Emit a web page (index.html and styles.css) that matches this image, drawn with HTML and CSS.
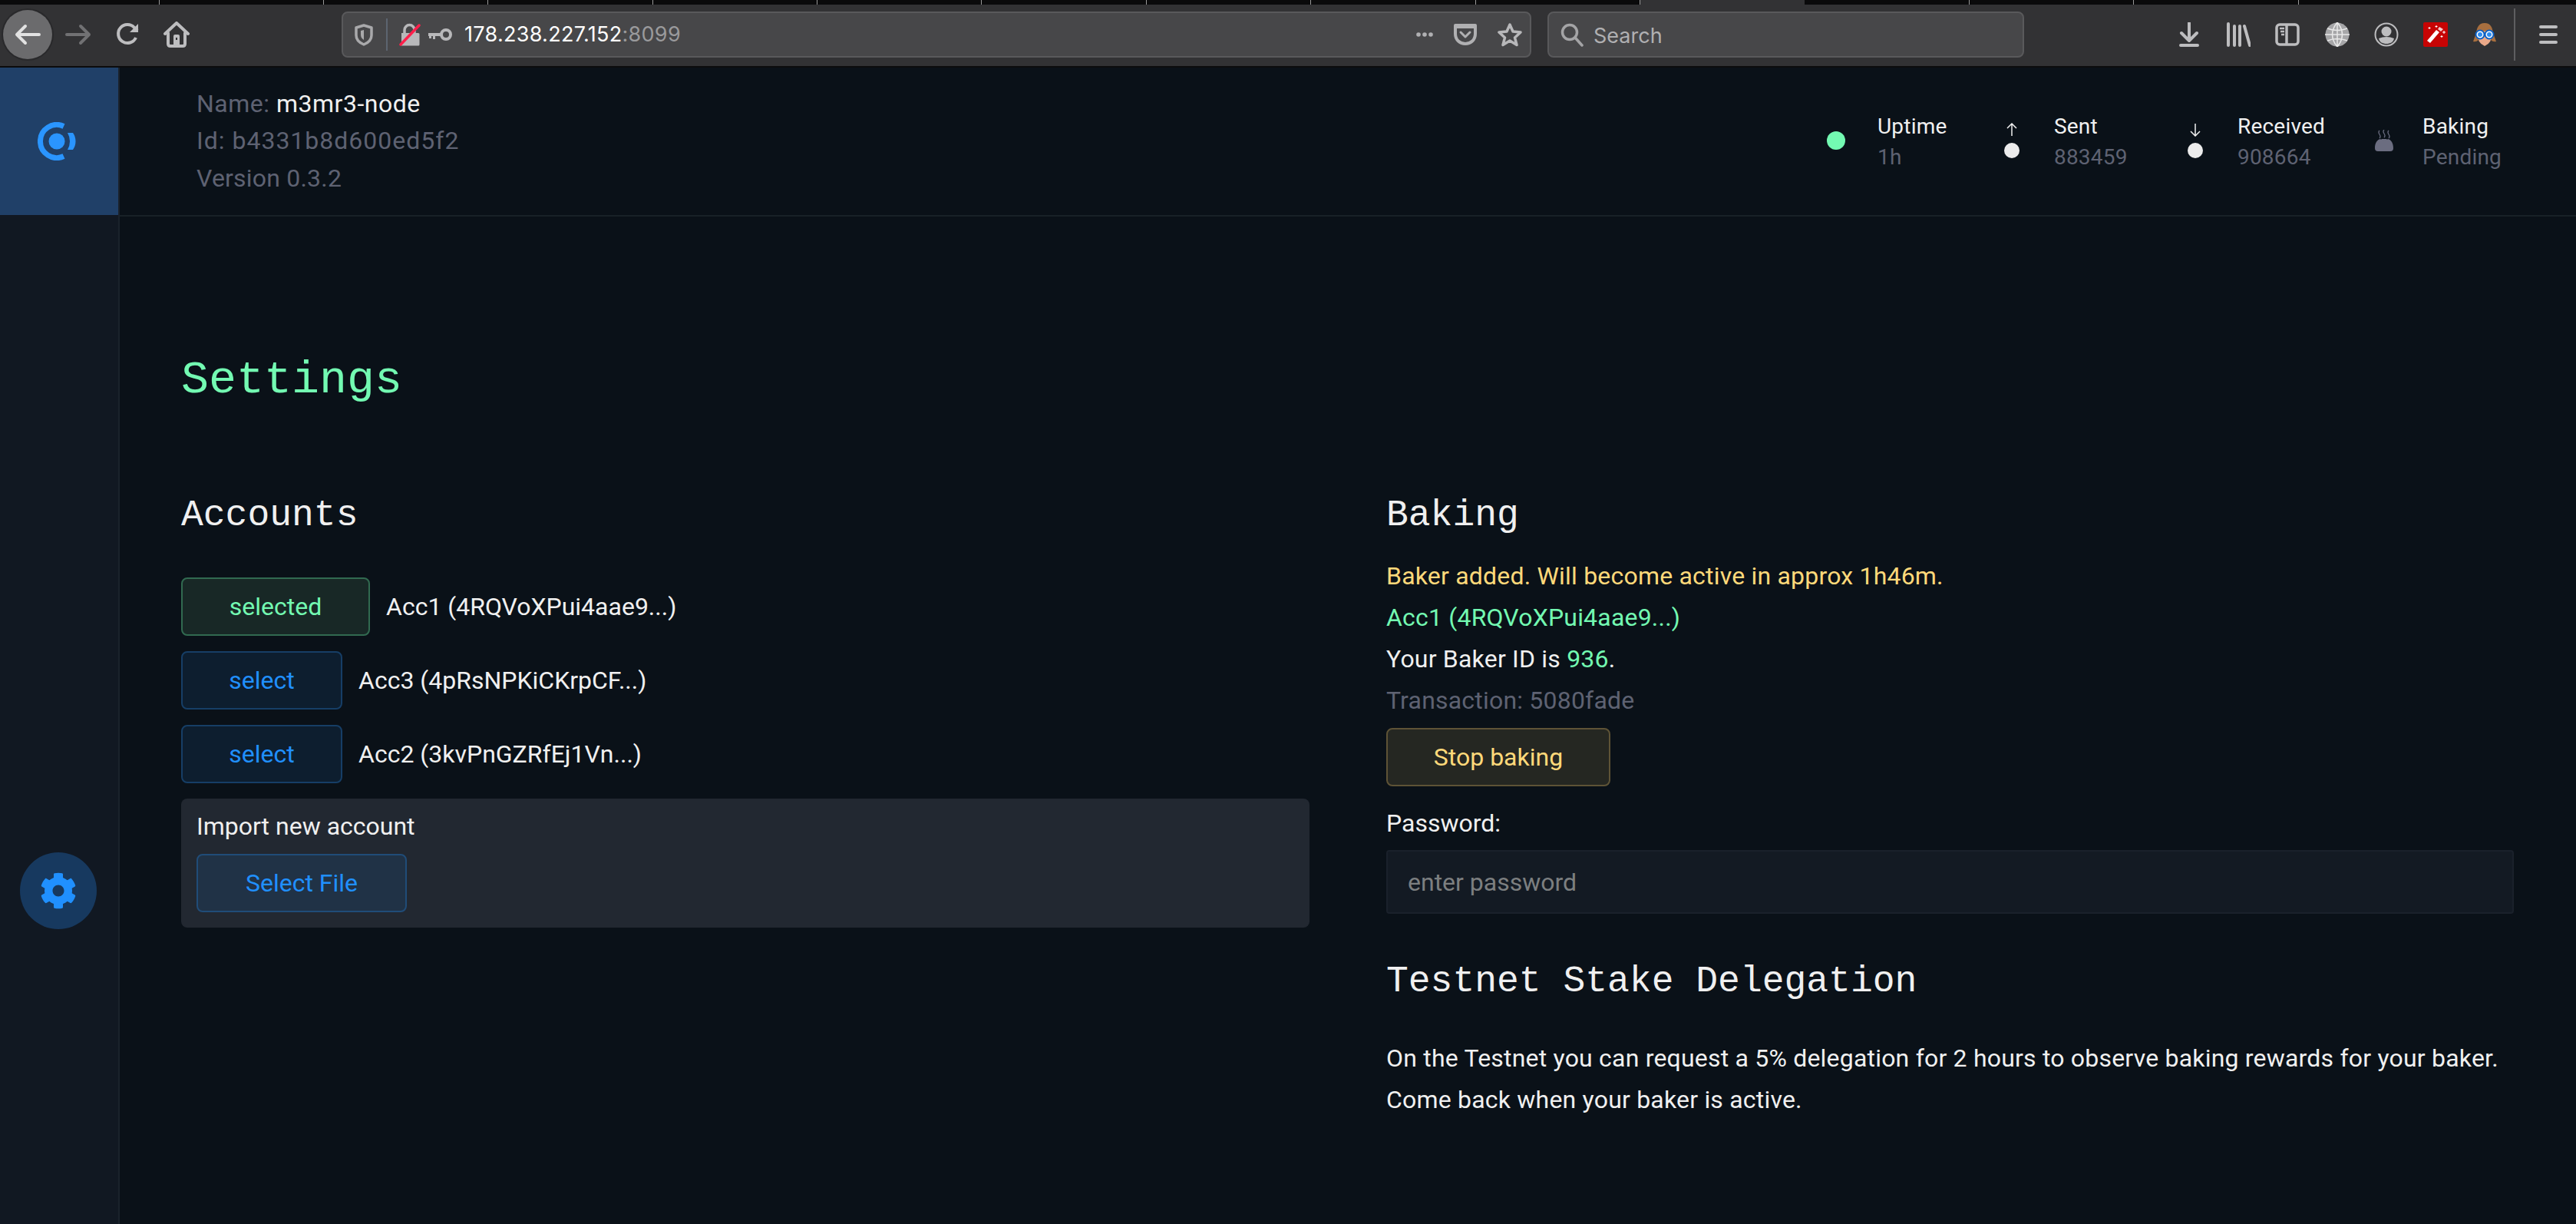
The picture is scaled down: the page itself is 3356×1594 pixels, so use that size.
FILE: index.html
```html
<!DOCTYPE html>
<html lang="en">
<head>
    <meta charset="UTF-8">
    <title>Settings</title>
    <link rel="stylesheet" href="styles.css">
</head>

<body>
    <!-- browser chrome -->
    <div class="tabstrip">
        <div class="tab first"></div>
        <div class="tab"></div>
        <div class="tab"></div>
        <div class="tab"></div>
        <div class="tab"></div>
        <div class="tab"></div>
        <div class="tab"></div>
        <div class="tab"></div>
        <div class="tab"></div>
        <div class="tab"></div>
        <div class="tab active"></div>
        <div class="tab"></div>
        <div class="tab"></div>
        <div class="tab"></div>
        <div class="tab last"></div>
    </div>
    <div class="toolbar">
        <div class="nav-btn back">
            <svg width="36" height="32" viewBox="0 0 36 32"><path d="M33 16H5M15 5 4 16l11 11" fill="none" stroke="#e2e2e2" stroke-width="4" stroke-linecap="round" stroke-linejoin="round"/></svg>
        </div>
        <div class="nav-btn fwd">
            <svg width="36" height="32" viewBox="0 0 36 32"><path d="M3 16h28M21 5l11 11-11 11" fill="none" stroke="#717173" stroke-width="4" stroke-linecap="round" stroke-linejoin="round"/></svg>
        </div>
        <div class="nav-btn">
            <svg width="32" height="32" viewBox="0 0 32 32"><path d="M27 20a12 12 0 1 1-2-13l4 4" fill="none" stroke="#bdbdbf" stroke-width="4"/><path d="M30 2v11H19z" fill="#bdbdbf"/></svg>
        </div>
        <div class="nav-btn">
            <svg width="34" height="34" viewBox="0 0 34 34"><path d="M2 16 17 2l15 14M6 15v14q0 3 3 3h16q3 0 3-3V15" fill="none" stroke="#bdbdbf" stroke-width="4" stroke-linecap="round" stroke-linejoin="round"/><path d="M13 31V19q0-2 2-2h4q2 0 2 2v12z" fill="#bdbdbf"/><rect x="16" y="21" width="2" height="3" fill="#323234"/></svg>
        </div>

        <div class="urlbar">
            <svg class="shield" width="24" height="29" viewBox="0 0 24 29"><path d="M12 2 22 5v10c0 6-5 10-10 12C7 25 2 21 2 15V5z" fill="none" stroke="#a9a9ab" stroke-width="3.5" stroke-linejoin="round"/><path d="M12 8v13c-3-2-4-4-4-7V9z" fill="#a9a9ab"/></svg>
            <span class="url-sep"></span>
            <svg class="lock" width="28" height="30" viewBox="0 0 28 30"><path d="M7 13V9a6.5 6.5 0 0 1 13 0v4" fill="none" stroke="#b8b8ba" stroke-width="3.5"/><path d="M3 13h22q1.5 0 1.5 1.5V28q0 1.5-1.5 1.5H3z" fill="#b8b8ba"/><path d="M2 28 26 3" stroke="#ff1f4b" stroke-width="3.5" stroke-linecap="round"/></svg>
            <svg class="key" width="32" height="18" viewBox="0 0 32 18"><circle cx="23" cy="9" r="6" fill="none" stroke="#b8b8ba" stroke-width="4"/><path d="M0 7h17v4H9v4H6v-4H4v3H1v-3H0z" fill="#b8b8ba"/></svg>
            <span class="url-text">178.238.227.152<span class="url-port">:8099</span></span>
            <span class="url-actions">
                <svg width="22" height="8" viewBox="0 0 22 8"><circle cx="3" cy="4" r="2.8" fill="#b0b0b2"/><circle cx="11" cy="4" r="2.8" fill="#b0b0b2"/><circle cx="19" cy="4" r="2.8" fill="#b0b0b2"/></svg>
                <svg class="pocket" width="32" height="30" viewBox="0 0 32 30"><path d="M3 3h26v11c0 8-6 13-13 13S3 22 3 14z" fill="none" stroke="#b0b0b2" stroke-width="4" stroke-linejoin="round"/><path d="M3 3h26v4H3z" fill="#b0b0b2"/><path d="M10 12l6 6 6-6" fill="none" stroke="#b0b0b2" stroke-width="3" stroke-linecap="round" stroke-linejoin="round"/></svg>
                <svg class="star" width="32" height="32" viewBox="0 0 32 32"><path d="M16 3l4 9 10 1-7.5 7 2.5 9.5-9-5.5-9 5.5L9.5 20 2 13l10-1z" fill="none" stroke="#b8b8ba" stroke-width="3.5" stroke-linejoin="round"/></svg>
            </span>
        </div>

        <div class="searchbar">
            <svg width="32" height="32" viewBox="0 0 32 32"><circle cx="13" cy="13" r="9.5" fill="none" stroke="#a4a4a6" stroke-width="3.5"/><path d="M20 20l9 10" stroke="#a4a4a6" stroke-width="3.5" stroke-linecap="round"/></svg>
            <span class="search-text">Search</span>
        </div>

        <div class="tools">
            <div class="tool">
                <svg width="26" height="32" viewBox="0 0 26 32"><path d="M13 1v22M3 14l10 10 10-10M2 30h22" fill="none" stroke="#bdbdbf" stroke-width="4" stroke-linecap="round" stroke-linejoin="round"/></svg>
            </div>
            <div class="tool">
                <svg width="32" height="32" viewBox="0 0 32 32"><path d="M3 2v28M11 5v25M18 5v25M24 5l7 25" fill="none" stroke="#bdbdbf" stroke-width="4" stroke-linecap="round"/></svg>
            </div>
            <div class="tool">
                <svg width="32" height="30" viewBox="0 0 32 30"><rect x="2" y="2" width="28" height="26" rx="4" fill="none" stroke="#bdbdbf" stroke-width="3.5"/><path d="M15 2v26" stroke="#bdbdbf" stroke-width="3.5"/><path d="M6 7h6M7 11h5M8 15h4" stroke="#bdbdbf" stroke-width="2.5"/></svg>
            </div>
            <div class="tool">
                <svg width="32" height="32" viewBox="0 0 32 32"><circle cx="16" cy="16" r="15.5" fill="#a6a6a8"/><path d="M16 0v32M0 16h32M3 8q13 5 26 0M3 24q13-5 26 0M16 0Q3 16 16 32M16 0q13 16 0 32" fill="none" stroke="#e8e8e8" stroke-width="1.5"/></svg>
            </div>
            <div class="tool">
                <svg width="32" height="32" viewBox="0 0 32 32"><circle cx="16" cy="16" r="14.5" fill="none" stroke="#bdbdbf" stroke-width="2"/><circle cx="16" cy="12" r="6.5" fill="#bdbdbf"/><path d="M6 21q10-4 20 0c-1 5-5 7-10 7s-9-2-10-7z" fill="#bdbdbf"/></svg>
            </div>
            <div class="tool">
                <svg width="32" height="32" viewBox="0 0 32 32"><rect width="32" height="32" rx="2" fill="#c70404"/><path d="M5 24 17 10l4 3L9 27z" fill="#fff"/><path d="M21 6l5 3-3 3-4-3z" fill="#fff" opacity=".8"/><path d="M8 6v3M6.5 7.5h3M17 4v3M15.5 5.5h3M27 11v4M25 13h4M24 17v3M22.5 18.5h3" stroke="#fff" stroke-width="1"/></svg>
            </div>
            <div class="tool">
                <svg width="30" height="30" viewBox="0 0 30 30"><path d="M15 0C7 0 5 6 4 13L0 24q4 1 7-2h16q3 3 7 2l-4-11C25 6 23 0 15 0z" fill="#a86f3f"/><path d="M6 13q9-5 18 0 1 13-9 17Q5 26 6 13z" fill="#eaa989"/><path d="M13 15h4" stroke="#fff" stroke-width="1.5"/><circle cx="9" cy="15" r="5.5" fill="#fff" stroke="#0a5fc4" stroke-width="2"/><circle cx="21" cy="15" r="5.5" fill="#fff" stroke="#0a5fc4" stroke-width="2"/><circle cx="9" cy="15" r="3" fill="#2d8cf0"/><circle cx="21" cy="15" r="3" fill="#2d8cf0"/></svg>
            </div>
        </div>
        <span class="tool-sep"></span>
        <div class="hamburger"><span></span><span></span><span></span></div>
    </div>

    <div class="app">
        <div class="sidebar">
            <div class="logo">
                <svg width="50" height="50" viewBox="0 0 50 50"><path d="M34 5.5A21.5 21.5 0 1 0 34 44.5" fill="none" stroke="#2a95ff" stroke-width="7"/><circle cx="25" cy="25" r="10.5" fill="#2a95ff"/><path d="M39 14h7q3.5 5 3.5 11T46 36h-7q3-5 3-11t-3-11z" fill="#2a95ff"/></svg>
            </div>
            <div class="gear">
                <svg width="48" height="48" viewBox="0 0 512 512"><path fill="#2090ff" d="M487.4 315.7l-42.6-24.6c4.3-23.2 4.3-47 0-70.2l42.6-24.6c4.9-2.8 7.1-8.6 5.5-14-11.1-35.6-30-67.8-54.7-94.6-3.8-4.1-10-5.1-14.8-2.3L380.8 110c-17.9-15.4-38.5-27.3-60.8-35.1V25.8c0-5.6-3.9-10.5-9.4-11.7-36.7-8.2-74.3-7.8-109.2 0-5.5 1.2-9.4 6.1-9.4 11.7V75c-22.2 7.9-42.8 19.8-60.8 35.1L88.7 85.5c-4.9-2.8-11-1.9-14.8 2.3-24.7 26.7-43.6 58.9-54.7 94.6-1.7 5.4.6 11.2 5.5 14L67.3 221c-4.3 23.2-4.3 47 0 70.2l-42.6 24.6c-4.9 2.8-7.1 8.6-5.5 14 11.1 35.6 30 67.8 54.7 94.6 3.8 4.1 10 5.1 14.8 2.3l42.6-24.6c17.9 15.4 38.5 27.3 60.8 35.1v49.2c0 5.6 3.9 10.5 9.4 11.7 36.7 8.2 74.3 7.8 109.2 0 5.5-1.2 9.4-6.1 9.4-11.7v-49.2c22.2-7.9 42.8-19.8 60.8-35.1l42.6 24.6c4.9 2.8 11 1.9 14.8-2.3 24.7-26.7 43.6-58.9 54.7-94.6 1.5-5.5-.7-11.3-5.6-14.1zM256 336c-44.1 0-80-35.9-80-80s35.9-80 80-80 80 35.9 80 80-35.9 80-80 80z"/></svg>
            </div>
        </div>

        <div class="page">
            <div class="header">
                <div class="node-info">
                    <div class="node-name">Name: <span class="white">m3mr3-node</span></div>
                    <div class="node-id">Id: b4331b8d600ed5f2</div>
                    <div class="node-version">Version 0.3.2</div>
                </div>
                <div class="stats">
                    <div class="stat-ico"><span class="dot green"></span></div>
                    <div class="stat-text"><div class="white">Uptime</div><div>1h</div></div>
                    <div class="stat-ico arrow-col">
                        <svg width="20" height="18" viewBox="0 0 20 18"><path d="M10 17V2M4 7l6-6 6 6" fill="none" stroke="#f0f0f0" stroke-width="1.5"/></svg>
                        <span class="dot small"></span>
                    </div>
                    <div class="stat-text"><div class="white">Sent</div><div>883459</div></div>
                    <div class="stat-ico arrow-col">
                        <svg width="20" height="18" viewBox="0 0 20 18"><path d="M10 1v15M4 11l6 6 6-6" fill="none" stroke="#f0f0f0" stroke-width="1.5"/></svg>
                        <span class="dot small"></span>
                    </div>
                    <div class="stat-text"><div class="white">Received</div><div>908664</div></div>
                    <div class="stat-ico">
                        <svg width="26" height="28" viewBox="0 0 26 28"><path d="M7 1q-2 2 0 5t0 5M13 0q-2 2 0 5t0 5M19 1q-2 2 0 5t0 5" fill="none" stroke="#6b6d80" stroke-width="1.3"/><path d="M1 24c0-7 3-11 7-12 1 1 1 1 2 0h6c1 1 1 1 2 0 4 1 7 5 7 12q0 4-4 4H5q-4 0-4-4z" fill="#6b6d80"/></svg>
                    </div>
                    <div class="stat-text"><div class="white">Baking</div><div>Pending</div></div>
                </div>
            </div>

            <div class="content">
                <h1 class="page-title">Settings</h1>
                <div class="columns">
                    <div class="col">
                        <h2 class="section-title">Accounts</h2>
                        <div class="account-list">
                            <div class="account">
                                <button class="btn btn-green btn-selected">selected</button>
                                <span>Acc1 (4RQVoXPui4aae9...)</span>
                            </div>
                            <div class="account">
                                <button class="btn btn-blue btn-select">select</button>
                                <span>Acc3 (4pRsNPKiCKrpCF...)</span>
                            </div>
                            <div class="account">
                                <button class="btn btn-blue btn-select">select</button>
                                <span>Acc2 (3kvPnGZRfEj1Vn...)</span>
                            </div>
                        </div>
                        <div class="import-box">
                            <div class="import-label">Import new account</div>
                            <button class="btn btn-file">Select File</button>
                        </div>
                    </div>
                    <div class="col col-right">
                        <h2 class="section-title">Baking</h2>
                        <div class="baking-lines">
                            <div class="yellow">Baker added. Will become active in approx 1h46m.</div>
                            <div class="green-text">Acc1 (4RQVoXPui4aae9...)</div>
                            <div>Your Baker ID is <span class="green-text">936</span>.</div>
                            <div class="muted">Transaction: 5080fade</div>
                        </div>
                        <button class="btn btn-yellow">Stop baking</button>
                        <label class="pw-label" for="pw">Password:</label>
                        <input class="pw-input" id="pw" type="password" placeholder="enter password">
                        <h2 class="section-title delegation">Testnet Stake Delegation</h2>
                        <p class="delegation-text">On the Testnet you can request a 5% delegation for 2 hours to observe baking rewards for your baker.<br>Come back when your baker is active.</p>
                    </div>
                </div>
            </div>
        </div>
    </div>
</body>

</html>
```

FILE: styles.css
```css
* {
    box-sizing: border-box;
}

html,
body {
    margin: 0;
    height: 1594px;
    overflow: hidden;
}

body {
    display: flex;
    flex-direction: column;
    background: #0a1118;
    color: #f0f0f0;
    font-family: "Roboto", "Liberation Sans", sans-serif;
    font-size: 32px;
    line-height: 54px;
}

/* browser chrome */
.tabstrip {
    display: flex;
    height: 6px;
    background: #0a0a0b;
}

.tab {
    width: 214.4px;
    flex: none;
    border-right: 1px solid #9a9a9a;
}

.tab.first {
    width: 207.5px;
}

.tab.active {
    background: #323234;
    border-right: 0;
}

.tab.last {
    border-right: 0;
}

.toolbar {
    display: flex;
    align-items: center;
    height: 82px;
    padding-left: 4px;
    padding-bottom: 2px;
    background: #323234;
    border-bottom: 2px solid #0c0c0d;
}

.nav-btn {
    display: flex;
    align-items: center;
    justify-content: center;
    width: 64px;
    height: 64px;
    flex: none;
}

.nav-btn.back {
    margin-right: 2px;
    border-radius: 50%;
    background: #6b6b6d;
    box-shadow: 0 0 0 2px #29292b;
}

.urlbar,
.searchbar {
    display: flex;
    align-items: center;
    height: 60px;
    flex: none;
    border: 2px solid #59595b;
    border-radius: 8px;
    background: #474749;
}

.urlbar {
    width: 1550px;
    margin-left: 183px;
    padding: 0 10px 0 15px;
    font-family: "Inter", "Roboto", sans-serif;
    font-size: 27px;
    color: #fff;
}

.url-sep {
    width: 2px;
    height: 42px;
    margin-left: 17px;
    background: #5c6470;
}

.lock {
    margin-left: 15px;
}

.key {
    margin-left: 10px;
}

.url-text {
    margin-left: 15px;
    letter-spacing: .3px;
}

.url-port {
    color: #9a9a9c;
}

.url-actions {
    display: flex;
    align-items: center;
    gap: 26px;
    margin-left: auto;
}

.searchbar {
    width: 621px;
    margin-left: 21px;
    padding-left: 14px;
    color: #b0b0b2;
    font-family: "Inter", "Roboto", sans-serif;
    font-size: 27px;
}

.search-text {
    margin-left: 12px;
    padding-top: 3px;
}

.tools {
    display: flex;
    margin-left: 183px;
}

.tool {
    display: flex;
    align-items: center;
    justify-content: center;
    width: 64.2px;
    height: 64px;
}

.tool-sep {
    width: 2px;
    height: 68px;
    margin-left: 6px;
    background: #5e5e60;
}

.hamburger {
    display: flex;
    flex-direction: column;
    gap: 6px;
    margin-left: 31px;
}

.hamburger span {
    display: block;
    width: 24px;
    height: 4px;
    border-radius: 2px;
    background: #bdbdbf;
}

/* app */
.app {
    display: flex;
    flex: 1;
    min-height: 0;
}

.sidebar {
    width: 156px;
    flex: none;
    background: #111822;
    border-right: 2px solid #1a222b;
}

.logo {
    display: flex;
    align-items: center;
    justify-content: center;
    height: 192px;
    padding-right: 7px;
    background: #204068;
}

.gear {
    display: flex;
    align-items: center;
    justify-content: center;
    width: 100px;
    height: 100px;
    margin: 830px 0 0 26px;
    border-radius: 50%;
    background: #17395f;
}

.page {
    flex: 1;
    min-width: 0;
}

.header {
    display: flex;
    align-items: center;
    justify-content: space-between;
    height: 194px;
    padding: 0 100px 2px 100px;
    border-bottom: 2px solid #182127;
}

.node-info {
    color: #5e6272;
    line-height: 48px;
}

.node-name {
    letter-spacing: .5px;
}

.node-id {
    letter-spacing: 1px;
}

.node-version {
    letter-spacing: .2px;
    padding-top: 1px;
}

.white {
    color: #f0f0f0;
}

.stats {
    display: grid;
    grid-template-columns: 66px 165px 65px 174px 65px 178px 63px 100px;
    align-items: center;
    font-size: 28px;
    line-height: 40px;
    color: #5e6272;
}

.stat-text {
    padding-top: 3px;
    white-space: nowrap;
    letter-spacing: .2px;
}

.stat-ico {
    display: flex;
}

.arrow-col {
    flex-direction: column;
    gap: 8px;
    width: 20px;
}

.dot {
    display: block;
    width: 24px;
    height: 24px;
    border-radius: 50%;
}

.dot.green {
    background: #73fab2;
}

.dot.small {
    width: 20px;
    height: 20px;
    background: #ececec;
}

.content {
    padding: 177px 80px 0 80px;
}

.page-title {
    margin: 0 0 109px;
    font-family: "Liberation Mono", monospace;
    font-size: 60px;
    font-weight: 400;
    line-height: 72px;
    color: #73fab2;
}

.columns {
    display: grid;
    grid-template-columns: 1470px 1469px;
    column-gap: 100px;
}

.section-title {
    margin: 0;
    padding-top: 3px;
    font-family: "Liberation Mono", monospace;
    font-size: 48px;
    font-weight: 400;
    line-height: 56px;
}

.account-list {
    display: flex;
    flex-direction: column;
    gap: 20px;
    margin-top: 53px;
}

.account {
    display: flex;
    align-items: center;
    gap: 21px;
}

.btn {
    display: block;
    height: 76px;
    padding: 0;
    border-radius: 8px;
    border: 2px solid;
    font-family: inherit;
    font-size: 32px;
}

.btn-selected {
    width: 246px;
}

.btn-select {
    width: 210px;
}

.btn-green {
    color: #73fab2;
    background: #182826;
    border-color: #316a50;
}

.btn-blue {
    color: #2090ff;
    background: #0d1e2f;
    border-color: #163e66;
}

.btn-file {
    width: 274px;
    color: #2090ff;
    background: #203246;
    border-color: #204c78;
}

.btn-yellow {
    width: 292px;
    margin-top: 9px;
    color: #ffd97a;
    background: #252722;
    border-color: #5e5336;
}

.import-box {
    height: 168px;
    margin-top: 20px;
    padding: 9px 20px;
    border-radius: 8px;
    background: #222831;
}

.import-label {
    height: 63px;
}

.baking-lines {
    margin-top: 24px;
    letter-spacing: .2px;
}

.yellow {
    color: #ffd97a;
}

.green-text {
    color: #73fab2;
}

.muted {
    color: #5e6272;
}

.pw-label {
    display: block;
    margin-top: 21px;
}

.pw-input {
    display: block;
    width: 100%;
    height: 83px;
    margin-top: 8px;
    padding: 0 26px;
    border: 2px solid #1a212b;
    border-radius: 4px;
    background: #131a23;
    color: #f0f0f0;
    font-family: inherit;
    font-size: 32px;
    outline: none;
}

.pw-input::placeholder {
    color: #7c7f80;
    opacity: 1;
}

.delegation {
    margin-top: 57px;
}

.delegation-text {
    margin: 45px 0 0;
    letter-spacing: .2px;
}
```
